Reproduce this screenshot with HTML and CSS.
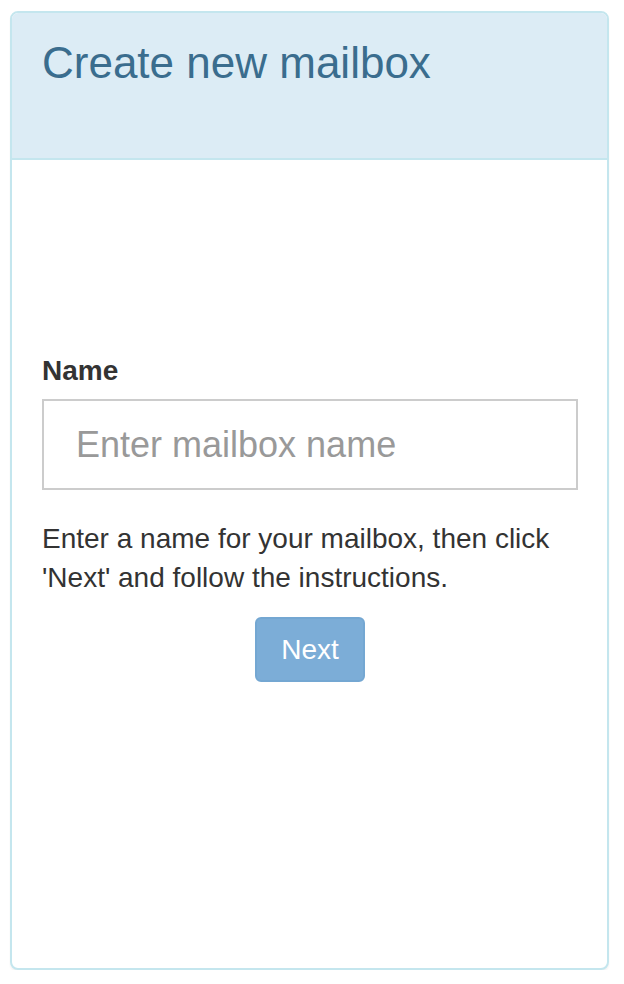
FILE: index.html
```html
<!DOCTYPE html>
<html lang="en">
<head>
<meta charset="utf-8">
<title>Create new mailbox</title>
<link rel="stylesheet" href="styles.css">
</head>
<body>
<div class="panel">
  <div class="panel-heading">
    <h3 class="panel-title">Create new mailbox</h3>
  </div>
  <div class="panel-body">
    <form class="form">
      <label class="label" for="mailbox-name">Name</label>
      <input class="input" id="mailbox-name" type="text" placeholder="Enter mailbox name">
      <p class="help">Enter a name for your mailbox, then click 'Next' and follow the instructions.</p>
      <div class="actions">
        <button class="btn" type="button" disabled>Next</button>
      </div>
    </form>
  </div>
</div>
</body>
</html>
```
FILE: styles.css
```css
html, body {
  margin: 0;
  padding: 0;
  background: #ffffff;
}
body {
  font-family: "Liberation Sans", Arial, Helvetica, sans-serif;
  color: #333333;
}
.panel {
  box-sizing: border-box;
  margin: 11px 0 0 10px;
  width: 599px;
  height: 959px;
  border: 2px solid #c4e6ee;
  border-radius: 8px;
  background: #ffffff;
  box-shadow: 0 2px 2px rgba(0, 0, 0, 0.05);
  display: flex;
  flex-direction: column;
  overflow: hidden;
}
.panel-heading {
  box-sizing: border-box;
  height: 147px;
  background: #dcecf5;
  border-bottom: 2px solid #c4e6ee;
  padding: 26px 30px 0 30px;
}
.panel-title {
  margin: 0;
  font-size: 44px;
  font-weight: normal;
  line-height: 1.1;
  color: #3a6d8e;
}
.panel-body {
  padding: 191px 29px 0 30px;
}
.form {
  display: flex;
  flex-direction: column;
}
.label {
  font-size: 28px;
  line-height: 40px;
  font-weight: bold;
  color: #333333;
  margin-bottom: 8px;
}
.input {
  box-sizing: border-box;
  width: 100%;
  height: 91px;
  margin: 0;
  padding: 0 32px;
  border: 2px solid #cccccc;
  border-radius: 0;
  font-family: "Liberation Sans", Arial, Helvetica, sans-serif;
  font-size: 36px;
  color: #555555;
  background: #ffffff;
  outline: none;
}
.input::placeholder {
  color: #999999;
}
.help {
  margin: 29px 0 0 0;
  font-size: 28px;
  line-height: 39px;
  color: #333333;
}
.actions {
  display: flex;
  justify-content: center;
  margin-top: 20px;
}
.btn {
  box-sizing: border-box;
  height: 65px;
  padding: 0 24px;
  border: 2px solid #74a7d2;
  border-radius: 6px;
  background: #7cadd7;
  color: #ffffff;
  font-family: "Liberation Sans", Arial, Helvetica, sans-serif;
  font-size: 28px;
  line-height: 37px;
}
```
